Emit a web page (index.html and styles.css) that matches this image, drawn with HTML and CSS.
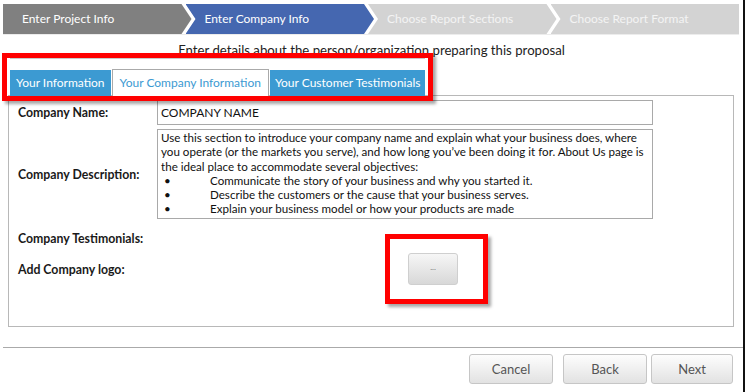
FILE: index.html
```html
<!DOCTYPE html>
<html lang="en">
<head>
  <meta charset="UTF-8" />
  <title>Proposal Wizard - Enter Company Info</title>
  <link rel="stylesheet" href="styles.css">
</head>
<body>
  <div class="frame">
    <!-- Wizard steps -->
    <ol class="steps">
      <li class="step done">Enter Project Info</li>
      <li class="step current">Enter Company Info</li>
      <li class="step">Choose Report Sections</li>
      <li class="step">Choose Report Format</li>
    </ol>

    <p class="intro">Enter details about the person/organization preparing this proposal</p>

    <!-- Tab strip -->
    <div class="tabs">
      <span class="tab">Your Information</span>
      <span class="tab active">Your Company Information</span>
      <span class="tab">Your Customer Testimonials</span>
    </div>

    <!-- Company form -->
    <div class="panel">
      <div class="row gap">
        <label class="label">Company Name:</label>
        <div class="field">COMPANY NAME</div>
      </div>
      <div class="row gap">
        <label class="label">Company Description:</label>
        <div class="field area">
          Use this section to introduce your company name and explain what your business does, where you operate (or the markets you serve), and how long you’ve been doing it for. About Us page is the ideal place to accommodate several objectives:
          <ul class="bullets">
            <li><span class="dot">•</span>Communicate the story of your business and why you started it.</li>
            <li><span class="dot">•</span>Describe the customers or the cause that your business serves.</li>
            <li><span class="dot">•</span>Explain your business model or how your products are made</li>
          </ul>
        </div>
      </div>
      <div class="row testimonials">
        <label class="label">Company Testimonials:</label>
      </div>
      <div class="row logo">
        <label class="label">Add Company logo:</label>
        <button class="browse">...</button>
      </div>
    </div>

    <!-- Navigation -->
    <div class="footer">
      <button class="nav cancel">Cancel</button>
      <button class="nav back">Back</button>
      <button class="nav next">Next</button>
    </div>

    <!-- Red annotation boxes -->
    <div class="callout callout-tabs"></div>
    <div class="callout callout-logo"></div>
  </div>
</body>
</html>
```

FILE: styles.css
```css
/* Basic reset */
body, html {
  margin: 0;
  padding: 0;
  background: #fff;
  font-family: Lato, "Open Sans", sans-serif;
  color: #1a1a1a;
}

.frame {
  position: relative;
  width: 745px;
  height: 392px;
  box-sizing: border-box;
  border-right: 2px solid #111;
  overflow: hidden;
}

/* Wizard steps */
.steps {
  display: flex;
  list-style: none;
  margin: 4px 4px 0 3px;
  padding: 0;
  height: 30px;
  box-shadow: 0 1px 0 #ececec;
}
.step {
  flex: 1;
  margin-left: -6px;
  padding-left: 19px;
  line-height: 30px;
  font-size: 12px;
  color: #f4f4f4;
  background: #d3d3d3;
  white-space: nowrap;
  clip-path: polygon(0 0, calc(100% - 10px) 0, 100% 50%, calc(100% - 10px) 100%, 0 100%, 10px 50%);
}
.step:first-child {
  margin-left: 0;
  clip-path: polygon(0 0, calc(100% - 10px) 0, 100% 50%, calc(100% - 10px) 100%, 0 100%);
}
.step:last-child {
  clip-path: polygon(0 0, 100% 0, 100% 100%, 0 100%, 10px 50%);
}
.step.done {
  background: #808080;
  color: #fff;
}
.step.current {
  background: #4567b0;
  color: #fff;
}

.intro {
  margin: 8px 0 0;
  text-align: center;
  font-size: 13.2px;
  line-height: 16px;
  color: #222;
}

/* Tabs */
.tabs {
  display: inline-flex;
  margin-left: 10px;
  padding-top: 11px;
  border-top: 1px solid #c9c9c9;
}
.tab {
  height: 26px;
  line-height: 26px;
  padding: 0 5px;
  font-size: 12px;
  color: #fff;
  background: #3c9ad2;
}
.tab:first-child {
  padding: 0 6px;
}
.tab.active {
  margin: -1px 1px 0;
  height: 26px;
  padding: 0 7px;
  color: #3c9ad2;
  background: #fff;
  border: 1px solid #aaa;
  border-bottom: none;
}

/* Form panel */
.panel {
  margin: -1px 9px 0 8px;
  padding: 4px 0 41px 9px;
  border: 1px solid #b8b8b8;
}
.row {
  display: flex;
  align-items: center;
}
.row.gap {
  margin-bottom: 4px;
}
.row.testimonials {
  height: 30px;
}
.row.logo {
  height: 32px;
}
.label {
  width: 139px;
  flex-shrink: 0;
  font-size: 12.3px;
  font-weight: bold;
  color: #1a1a1a;
}
.field {
  width: 496px;
  box-sizing: border-box;
  height: 25px;
  line-height: 23px;
  padding: 0 3px;
  border: 1px solid #a9a9a9;
  font-size: 12px;
  color: #111;
}
.field.area {
  height: 90px;
  padding: 1px 3px;
  line-height: 14.3px;
  font-size: 11.6px;
}
.bullets {
  list-style: none;
  margin: 0;
  padding: 0;
}
.bullets li {
  display: flex;
}
.dot {
  width: 46px;
  padding-left: 3px;
  flex-shrink: 0;
}
.browse {
  margin-left: 251px;
  width: 50px;
  height: 32px;
  padding: 0 0 4px;
  border: 1px solid #cfcfcf;
  border-radius: 3px;
  background: linear-gradient(180deg, #f6f6f6, #d8d8d8);
  font-family: inherit;
  font-size: 8px;
  color: #777;
}

/* Footer navigation */
.footer {
  display: flex;
  justify-content: flex-end;
  margin: 20px 0 0 3px;
  padding: 6px 10px 0 0;
  border-top: 1px solid #aaa;
}
.nav {
  width: 84px;
  height: 30px;
  border: 1px solid #c6c6c6;
  border-radius: 3px;
  background: linear-gradient(180deg, #fdfdfd, #e2e2e2);
  font-family: inherit;
  font-size: 13px;
  color: #555;
}
.nav.cancel {
  margin-right: 10px;
}
.nav.back {
  margin-right: 4px;
}
.nav.next {
  width: 82px;
}

/* Red annotation boxes */
.callout {
  position: absolute;
  border: 5px solid #f00;
  box-shadow: 3px 3px 3px rgba(0, 0, 0, 0.35);
}
.callout-tabs {
  left: 2px;
  top: 53px;
  width: 421px;
  height: 38px;
}
.callout-logo {
  left: 385px;
  top: 234px;
  width: 93px;
  height: 60px;
}
```
